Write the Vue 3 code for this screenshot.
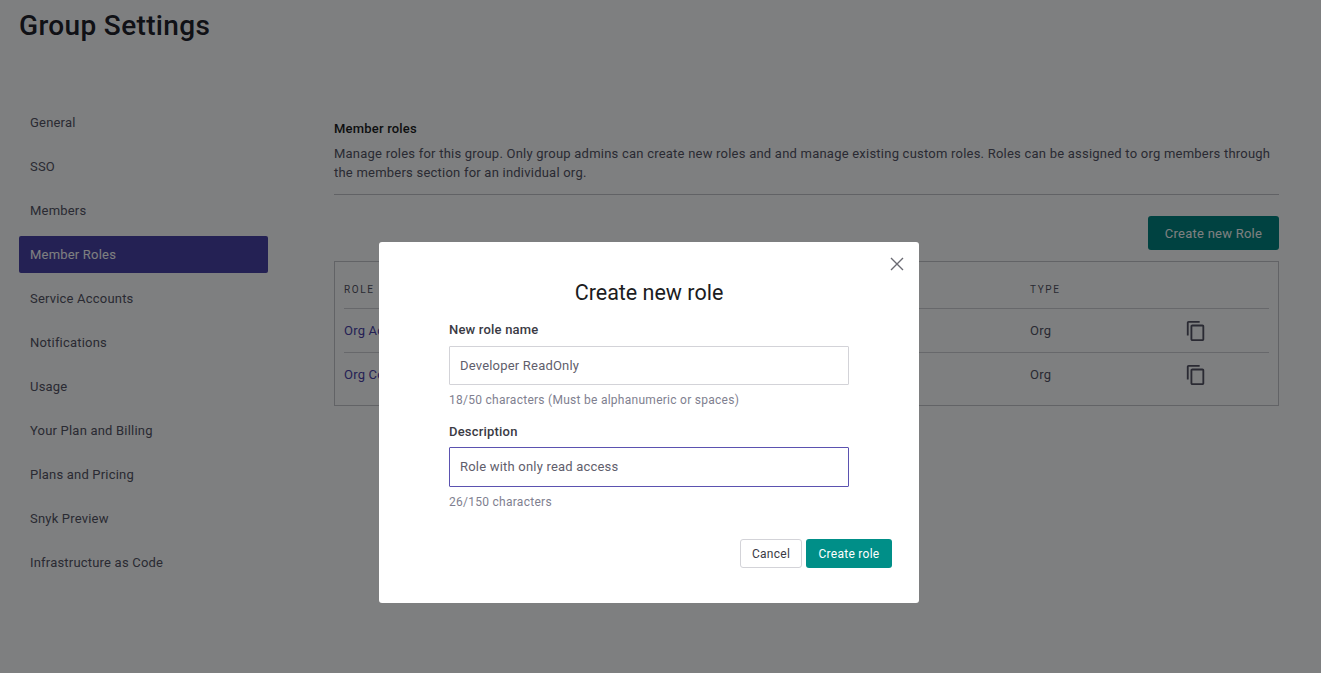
<template>
  <div class="page">
    <h1 class="title">Group Settings</h1>
    <div class="layout">
      <nav class="sidebar">
        <a v-for="item in navItems" :key="item" class="nav-item" :class="{ active: item === 'Member Roles' }">{{ item }}</a>
      </nav>
      <main class="content">
        <h2 class="section-title">Member roles</h2>
        <p class="section-text">Manage roles for this group. Only group admins can create new roles and and manage existing custom roles. Roles can be assigned to org members through the members section for an individual org.</p>
        <div class="toolbar">
          <button class="btn-new">Create new Role</button>
        </div>
        <div class="table-box">
          <div class="row head">
            <span class="col-name">ROLE</span>
            <span class="col-type">TYPE</span>
            <span class="col-action"></span>
          </div>
          <div v-for="role in roles" :key="role" class="row">
            <a class="col-name role-link">{{ role }}</a>
            <span class="col-type">Org</span>
            <span class="col-action">
              <svg class="copy" viewBox="0 0 24 24" width="22" height="22">
                <path d="M16 1H4c-1.100 0-2 .9-2 2v14h2V3h12V1zm3 4H8c-1.100 0-2 .9-2 2v14c0 1.100.9 2 2 2h11c1.100 0 2-.9 2-2V7c0-1.100-.9-2-2-2zm0 16H8V7h11v14z" />
              </svg>
            </span>
          </div>
        </div>
      </main>
    </div>

    <div class="overlay">
      <div class="modal">
        <button class="close" aria-label="Close">
          <svg viewBox="0 0 14 14" width="14" height="14">
            <path d="M1 1l12 12M13 1L1 13" />
          </svg>
        </button>
        <h3 class="modal-title">Create new role</h3>
        <label class="field-label">New role name</label>
        <input v-model="roleName" class="field" type="text" />
        <div class="hint">{{ roleName.length }}/50 characters (Must be alphanumeric or spaces)</div>
        <label class="field-label second">Description</label>
        <input v-model="description" class="field focused" type="text" />
        <div class="hint">{{ description.length }}/150 characters</div>
        <div class="actions">
          <button class="btn-cancel">Cancel</button>
          <button class="btn-create">Create role</button>
        </div>
      </div>
    </div>
  </div>
</template>

<script setup>
import { ref } from "vue"

const navItems = [
  "General",
  "SSO",
  "Members",
  "Member Roles",
  "Service Accounts",
  "Notifications",
  "Usage",
  "Your Plan and Billing",
  "Plans and Pricing",
  "Snyk Preview",
  "Infrastructure as Code",
]
const roles = ["Org Admin", "Org Collaborator"]
const roleName = ref("Developer ReadOnly")
const description = ref("Role with only read access")
</script>

<style scoped>
.page {
  height: 673px;
  overflow: hidden;
  background: #fff;
  font-family: Roboto, "Liberation Sans", sans-serif;
  font-size: 13px;
  color: #555463;
  letter-spacing: 0.2px;
}
.title {
  margin: 0;
  padding: 8px 0 0 19px;
  height: 104px;
  box-sizing: border-box;
  font-size: 28px;
  line-height: 36px;
  font-weight: 500;
  letter-spacing: 0.35px;
  color: #22222a;
}
.layout {
  display: flex;
  padding: 0 42px 0 19px;
}
.sidebar {
  width: 249px;
  margin-right: 66px;
  display: flex;
  flex-direction: column;
  row-gap: 7px;
  flex-shrink: 0;
}
.nav-item {
  height: 37px;
  line-height: 37px;
  padding-left: 11px;
  border-radius: 2px;
}
.nav-item.active {
  background: #4a42a6;
  color: #fff;
}
.content {
  flex: 1;
  padding-top: 15px;
}
.section-title {
  margin: 0;
  font-size: 13px;
  line-height: 20px;
  font-weight: 500;
  color: #1c1c21;
}
.section-text {
  margin: 5px 0 0;
  line-height: 19px;
  padding-bottom: 12px;
  border-bottom: 1px solid #c4c4c8;
  letter-spacing: 0.225px;
}
.toolbar {
  display: flex;
  justify-content: flex-end;
  margin-top: 21px;
}
.btn-new {
  width: 131px;
  height: 34px;
  border: none;
  border-radius: 3px;
  background: #00857f;
  color: #fff;
  font: inherit;
  letter-spacing: 0.25px;
}
.table-box {
  margin-top: 11px;
  height: 145px;
  box-sizing: border-box;
  border: 1px solid #c6c6ca;
  padding: 0 9px;
}
.row {
  display: flex;
  align-items: center;
  height: 44px;
  box-sizing: border-box;
  border-top: 1px solid #d0d0d4;
}
.row.head {
  height: 46px;
  border-top: none;
  padding-top: 9px;
  font-size: 10px;
  letter-spacing: 1.6px;
}
.col-name {
  width: 686px;
}
.role-link {
  color: #4b42a8;
}
.col-type {
  width: 155px;
}
.col-action {
  display: flex;
}
.copy {
  fill: #555463;
}
.overlay {
  position: fixed;
  inset: 0;
  background: rgba(0, 2, 4, 0.505);
  padding: 242px 0 0 379px;
}
.modal {
  position: relative;
  width: 540px;
  height: 361px;
  box-sizing: border-box;
  padding: 37px 70px 0;
  background: #fff;
  border-radius: 3px;
}
.close {
  position: absolute;
  top: 15px;
  right: 15px;
  padding: 0;
  border: none;
  background: none;
  display: flex;
}
.close path {
  stroke: #6a6a72;
  stroke-width: 1.4;
  fill: none;
}
.modal-title {
  margin: 0;
  text-align: center;
  font-size: 21.5px;
  line-height: 28px;
  font-weight: 400;
  letter-spacing: 0;
  color: #1c1c21;
}
.field-label {
  display: block;
  margin-top: 13px;
  height: 20px;
  line-height: 20px;
  font-weight: 500;
  color: #3a3a44;
}
.field-label.second {
  margin-top: 13px;
}
.field {
  display: block;
  width: 400px;
  height: 39px;
  margin-top: 6px;
  padding: 0 10px;
  box-sizing: border-box;
  border: 1px solid #d3d3d8;
  border-radius: 1px;
  outline: none;
  font: inherit;
  letter-spacing: inherit;
  color: #5f5e6c;
}
.field.focused {
  height: 40px;
  margin-top: 5px;
  padding-bottom: 2px;
  border-color: #5b52b0;
}
.hint {
  margin-top: 6px;
  height: 18px;
  line-height: 18px;
  font-size: 12px;
  letter-spacing: 0.27px;
  color: #7f7f90;
}
.actions {
  display: flex;
  justify-content: flex-end;
  column-gap: 4px;
  margin: 28px -43px 0 0;
}
.btn-cancel,
.btn-create {
  height: 29px;
  border-radius: 3px;
  font: inherit;
  font-size: 12px;
  letter-spacing: 0.27px;
  padding: 0;
}
.btn-cancel {
  width: 62px;
  background: #fff;
  border: 1px solid #d3d3d8;
  color: #3a3a44;
}
.btn-create {
  width: 86px;
  background: #008f88;
  border: none;
  color: #fff;
}
</style>
